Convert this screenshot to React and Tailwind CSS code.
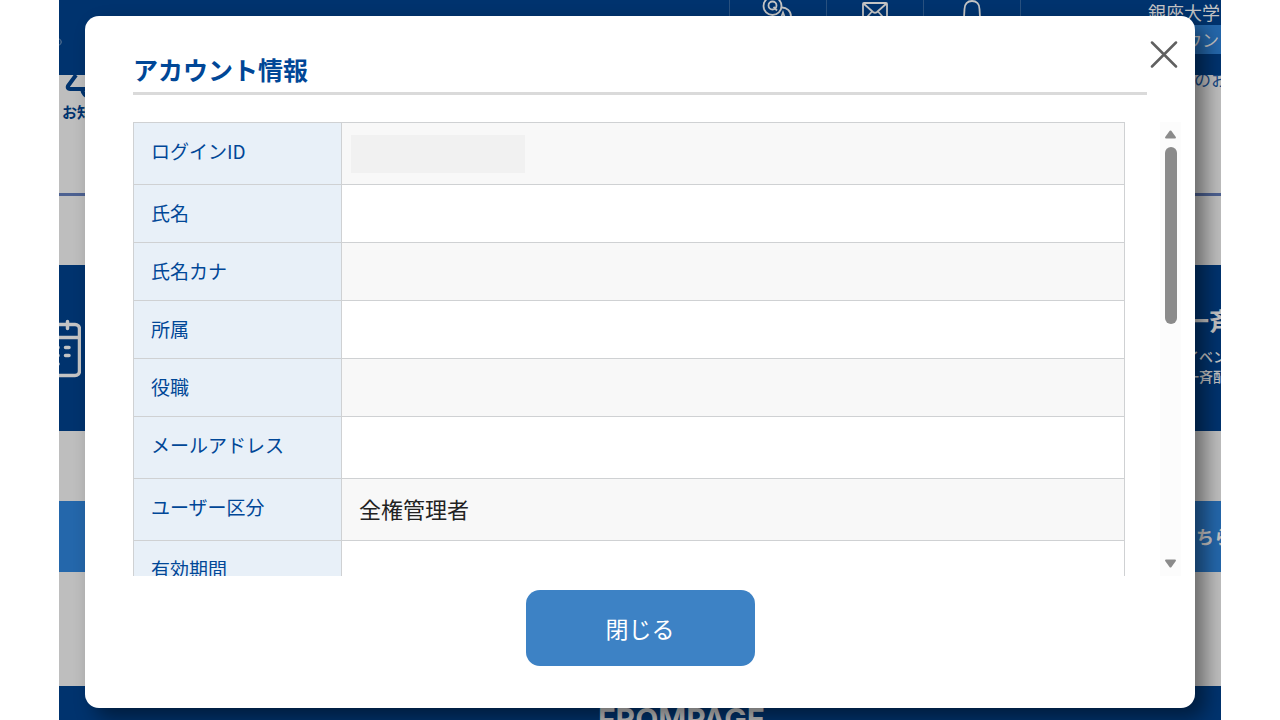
import React from "react";

const rows = [
  { label: "ログインID", value: <span className="-ml-2 block h-[38px] w-[174px] bg-[#f1f1f1]" />, tall: true },
  { label: "氏名" },
  { label: "氏名カナ" },
  { label: "所属" },
  { label: "役職" },
  { label: "メールアドレス", tall: true },
  { label: "ユーザー区分", value: <span className="block pb-1">全権管理者</span>, tall: true },
  { label: "有効期間" },
];

function QaIcon() {
  return (
    <svg width="36" height="32" viewBox="0 0 36 32" fill="none" stroke="currentColor" strokeWidth="1.800">
      <circle cx="12.500" cy="6" r="9" />
      <circle cx="12.500" cy="5.500" r="4" />
      <path d="M13.500 7l3.500 3.500" />
      <path d="M21.500 7.500a9 9 0 0 1 9.500 9v6" />
      <path d="M19.500 22l3.500-9.500 3.500 9.500" />
    </svg>
  );
}

function MailIcon() {
  return (
    <svg width="28" height="24" viewBox="0 0 28 24" fill="none" stroke="currentColor" strokeWidth="1.800">
      <rect x="2" y="3" width="24" height="19" rx="1" />
      <path d="M2.500 3.500l9.500 8.500q2 1.500 4 0l9.500-8.500M2.500 21l8.500-9.500M25.500 21L17 11.500" />
    </svg>
  );
}

function BellIcon() {
  return (
    <svg width="24" height="30" viewBox="0 0 24 30" fill="none" stroke="currentColor" strokeWidth="1.800">
      <path d="M3.500 26L4.500 9C4.500 4 7.500 1 12 1s7.500 3 7.500 8l1 17z" />
    </svg>
  );
}

function CalendarIcon() {
  return (
    <svg width="54" height="60" viewBox="0 0 54 60" fill="none" stroke="currentColor" strokeWidth="3.500" strokeLinecap="round">
      <rect x="1.500" y="5.500" width="51" height="51" rx="4.500" />
      <path d="M2 18.500h50M14 2.500v7M40.500 2.500v7" />
      <path d="M27 28.500h4M38.500 28.500h3.500M27 36.500h4M38.500 36.500h3.500M27 45h4" />
    </svg>
  );
}

function Background() {
  return (
    <div className="flex h-full flex-col bg-[#bebebe] whitespace-nowrap text-[#c4c4c4]">
      <header className="flex h-[75px] shrink-0 overflow-hidden bg-[#00336e]">
        <svg className="mt-9 text-[#687f99]" width="4" height="12" viewBox="0 0 4 12" fill="none" stroke="currentColor">
          <path d="M0 2.500Q4.500 6 0 9.500" />
        </svg>
        <nav className="ml-auto flex">
          <a href="#qa" aria-label="Q&A" className="flex w-[97px] items-start justify-center border-l border-[#29517f]"><QaIcon /></a>
          <a href="#mail" aria-label="メール" className="flex w-[97px] items-start justify-center border-l border-[#29517f]"><MailIcon /></a>
          <a href="#notice" aria-label="通知" className="flex w-[98px] items-start justify-center border-x border-[#29517f]"><BellIcon /></a>
        </nav>
        <div className="ml-[127px] w-[73px]">
          <p className="h-[25px] text-[18px] leading-6">銀座大学</p>
          <a href="#account" className="block h-[29px] w-40 bg-[#2467ab] pl-[3px] text-[17px] leading-[29px]">アカウント情報</a>
        </div>
      </header>
      <section className="h-[190px] shrink-0 overflow-hidden text-[#00336e]">
        <div className="flex h-[118px] justify-between">
          <div className="w-16 pl-[3px]">
            <svg width="60" height="25" viewBox="0 0 60 25" fill="none" stroke="currentColor" strokeWidth="4" strokeLinejoin="round">
              <path d="M14 0L6 11Q5 14 8 14H20Q21.500 22 28 22t7-8H47Q50 14 48.500 11L42 0" />
              <path d="M20 14h16" />
            </svg>
            <p className="text-[15px] leading-6 font-bold">お知らせ</p>
          </div>
          <p className="-mt-2 w-[27px] text-[17px] leading-6 text-[#174883]">のお知らせ</p>
        </div>
        <div className="h-[3px] bg-[#4d6191]" />
      </section>
      <section className="flex h-[166px] shrink-0 items-start justify-between overflow-hidden bg-[#00336e]">
        <div className="-ml-8 pt-[54px]"><CalendarIcon /></div>
        <div className="w-[36px] pt-[37px]">
          <h2 className="text-[24px] leading-[36px] font-bold">一斉配信</h2>
          <p className="mt-2 text-[14px] leading-5 font-medium">イベント</p>
          <p className="text-[14px] leading-5 font-medium">一斉配信</p>
        </div>
      </section>
      <div className="h-[70px] shrink-0" />
      <section className="flex h-[71px] shrink-0 items-center justify-end overflow-hidden bg-[#2467ab]">
        <p className="w-[25px] text-[18px] font-bold">ちらから</p>
      </section>
      <div className="h-[114px] shrink-0" />
      <footer className="flex flex-1 justify-center overflow-hidden bg-[#00336e] pt-4 pl-20 font-['Inter',sans-serif] text-[30px] font-bold">
        <span className="mr-[-3px] leading-[34px]">FROMPAGE</span>
      </footer>
    </div>
  );
}

function Scrollbar() {
  return (
    <div className="flex w-[21px] shrink-0 flex-col items-center justify-between bg-[#fcfcfc] py-2 text-[#8b8b8b]" aria-hidden="true">
      <div className="flex flex-col items-center gap-2">
        <svg width="11" height="9" viewBox="0 0 11 9" fill="currentColor"><path d="M4.700.8Q5.500 0 6.300.8L10.800 7Q11.300 8.500 10 8.500H1Q-.3 8.500.2 7z" /></svg>
        <div className="h-[177px] w-3 rounded-full bg-[#8b8b8b]" />
      </div>
      <svg width="11" height="9" viewBox="0 0 11 9" fill="currentColor"><path d="M4.700 8.200Q5.500 9 6.300 8.200L10.800 2Q11.300.5 10 .5H1Q-.3.5.2 2z" /></svg>
    </div>
  );
}

export default function App() {
  return (
    <div className="h-screen bg-white px-[59px] font-['Noto_Sans_CJK_JP',sans-serif]">
      <div className="relative h-full overflow-hidden">
        <Background />
        <div
          role="dialog"
          aria-modal="true"
          aria-labelledby="account-title"
          className="absolute inset-x-[26px] top-4 bottom-3 flex flex-col rounded-[14px] bg-white pt-[35px] pb-[42px] shadow-[10px_10px_20px_rgba(0,0,0,0.45)]"
        >
          <button type="button" aria-label="閉じる" className="absolute top-6 right-[17px] text-[#606060]">
            <svg width="28" height="28" viewBox="0 0 28 28" fill="none" stroke="currentColor" strokeWidth="2.500" strokeLinecap="round">
              <path d="M2 2.500l24 24M26 2.500l-24 24" />
            </svg>
          </button>
          <h1 id="account-title" className="mx-12 border-b-[3px] border-[#dadada] pb-[5px] text-[25px] leading-9 font-bold text-[#004797]">
            アカウント情報
          </h1>
          <div className="mt-[27px] flex min-h-0 flex-1 gap-[35px] pr-[14px] pl-12">
            <div className="flex-1 overflow-y-auto [scrollbar-width:none]">
              <table className="w-full border-collapse">
                <tbody>
                  {rows.map((row) => (
                    <tr key={row.label} className={row.tall ? "h-[62px] odd:bg-[#f8f8f8]" : "h-[58px] odd:bg-[#f8f8f8]"}>
                      <th
                        scope="row"
                        className={`w-[208px] border border-[#cfd1d3] bg-[#e8f0f8] pl-[17px] text-left text-[19px] leading-7 font-normal text-[#004797] ${row.tall ? "pb-[6px]" : "pb-[2px]"}`}
                      >
                        {row.label}
                      </th>
                      <td className="border border-[#cfd1d3] px-[17px] text-[22px] leading-8 text-[#222]">{row.value}</td>
                    </tr>
                  ))}
                </tbody>
              </table>
            </div>
            <Scrollbar />
          </div>
          <button type="button" className="mt-[14px] h-[76px] w-[229px] shrink-0 self-center rounded-[14px] bg-[#3d82c5] text-[23px] text-white">
            閉じる
          </button>
        </div>
      </div>
    </div>
  );
}
